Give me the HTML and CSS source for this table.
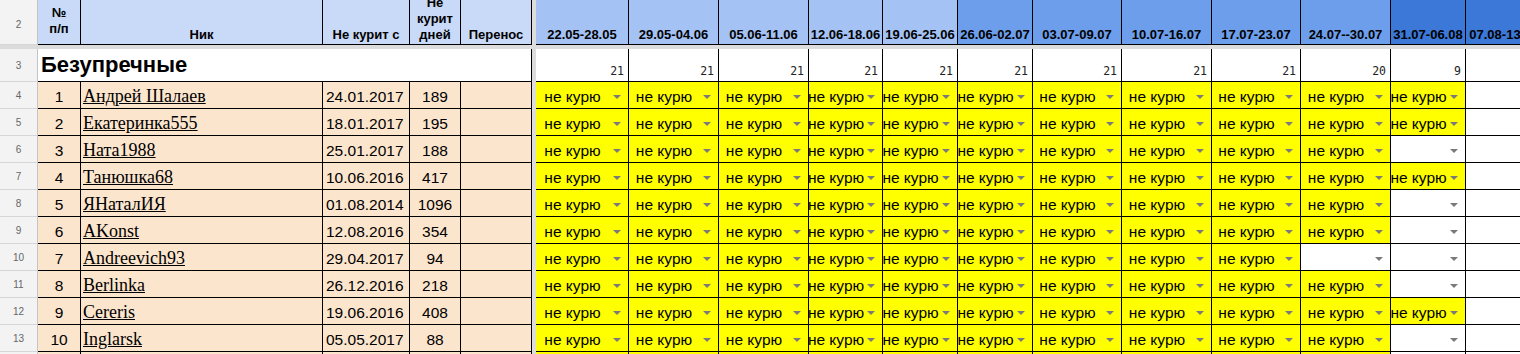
FILE: index.html
```html
<!DOCTYPE html>
<html lang="ru">
<head>
<meta charset="utf-8">
<title>Безупречные</title>
<link rel="stylesheet" href="styles.css">
</head>
<body>
<div class="sheet">
  <div class="band-v"></div>
  <div class="band-h"></div>

  <div class="rh rh-top">2</div>
  <div class="h h-no">№<br>п/п</div>
  <div class="h">Ник</div>
  <div class="h">Не курит с</div>
  <div class="h">Не<br>курит<br>дней</div>
  <div class="h">Перенос</div>
  <div class="h hd1">22.05-28.05</div>
  <div class="h hd1">29.05-04.06</div>
  <div class="h hd1">05.06-11.06</div>
  <div class="h hd1">12.06-18.06</div>
  <div class="h hd1">19.06-25.06</div>
  <div class="h hd2">26.06-02.07</div>
  <div class="h hd2">03.07-09.07</div>
  <div class="h hd2">10.07-16.07</div>
  <div class="h hd2">17.07-23.07</div>
  <div class="h hd2">24.07--30.07</div>
  <div class="h hd3">31.07-06.08</div>
  <div class="h hd3">07.08-13.08</div>

  <div class="rh">3</div>
  <div class="title">Безупречные</div>
  <div class="cnt">21</div><div class="cnt">21</div><div class="cnt">21</div><div class="cnt">21</div><div class="cnt">21</div><div class="cnt">21</div><div class="cnt">21</div><div class="cnt">21</div><div class="cnt">21</div><div class="cnt">20</div><div class="cnt">9</div><div class="cnt"></div>

  <div class="rh">4</div>
  <div class="c n">1</div><div class="c nick"><a class="lk">Андрей Шалаев</a></div><div class="c date">24.01.2017</div><div class="c days">189</div><div class="c"></div>
  <div class="dd y"><span class="t">не курю</span></div><div class="dd y"><span class="t">не курю</span></div><div class="dd y"><span class="t">не курю</span></div><div class="dd y"><span class="t">не курю</span></div><div class="dd y"><span class="t">не курю</span></div><div class="dd y"><span class="t">не курю</span></div><div class="dd y"><span class="t">не курю</span></div><div class="dd y"><span class="t">не курю</span></div><div class="dd y"><span class="t">не курю</span></div><div class="dd y"><span class="t">не курю</span></div><div class="dd y"><span class="t">не курю</span></div><div class="e"></div>

  <div class="rh">5</div>
  <div class="c n">2</div><div class="c nick"><a class="lk">Екатеринка555</a></div><div class="c date">18.01.2017</div><div class="c days">195</div><div class="c"></div>
  <div class="dd y"><span class="t">не курю</span></div><div class="dd y"><span class="t">не курю</span></div><div class="dd y"><span class="t">не курю</span></div><div class="dd y"><span class="t">не курю</span></div><div class="dd y"><span class="t">не курю</span></div><div class="dd y"><span class="t">не курю</span></div><div class="dd y"><span class="t">не курю</span></div><div class="dd y"><span class="t">не курю</span></div><div class="dd y"><span class="t">не курю</span></div><div class="dd y"><span class="t">не курю</span></div><div class="dd y"><span class="t">не курю</span></div><div class="e"></div>

  <div class="rh">6</div>
  <div class="c n">3</div><div class="c nick"><a class="lk">Ната1988</a></div><div class="c date">25.01.2017</div><div class="c days">188</div><div class="c"></div>
  <div class="dd y"><span class="t">не курю</span></div><div class="dd y"><span class="t">не курю</span></div><div class="dd y"><span class="t">не курю</span></div><div class="dd y"><span class="t">не курю</span></div><div class="dd y"><span class="t">не курю</span></div><div class="dd y"><span class="t">не курю</span></div><div class="dd y"><span class="t">не курю</span></div><div class="dd y"><span class="t">не курю</span></div><div class="dd y"><span class="t">не курю</span></div><div class="dd y"><span class="t">не курю</span></div><div class="dd w"></div><div class="e"></div>

  <div class="rh">7</div>
  <div class="c n">4</div><div class="c nick"><a class="lk">Танюшка68</a></div><div class="c date">10.06.2016</div><div class="c days">417</div><div class="c"></div>
  <div class="dd y"><span class="t">не курю</span></div><div class="dd y"><span class="t">не курю</span></div><div class="dd y"><span class="t">не курю</span></div><div class="dd y"><span class="t">не курю</span></div><div class="dd y"><span class="t">не курю</span></div><div class="dd y"><span class="t">не курю</span></div><div class="dd y"><span class="t">не курю</span></div><div class="dd y"><span class="t">не курю</span></div><div class="dd y"><span class="t">не курю</span></div><div class="dd y"><span class="t">не курю</span></div><div class="dd y"><span class="t">не курю</span></div><div class="e"></div>

  <div class="rh">8</div>
  <div class="c n">5</div><div class="c nick"><a class="lk">ЯНаталИЯ</a></div><div class="c date">01.08.2014</div><div class="c days">1096</div><div class="c"></div>
  <div class="dd y"><span class="t">не курю</span></div><div class="dd y"><span class="t">не курю</span></div><div class="dd y"><span class="t">не курю</span></div><div class="dd y"><span class="t">не курю</span></div><div class="dd y"><span class="t">не курю</span></div><div class="dd y"><span class="t">не курю</span></div><div class="dd y"><span class="t">не курю</span></div><div class="dd y"><span class="t">не курю</span></div><div class="dd y"><span class="t">не курю</span></div><div class="dd y"><span class="t">не курю</span></div><div class="dd w"></div><div class="e"></div>

  <div class="rh">9</div>
  <div class="c n">6</div><div class="c nick"><a class="lk">AKonst</a></div><div class="c date">12.08.2016</div><div class="c days">354</div><div class="c"></div>
  <div class="dd y"><span class="t">не курю</span></div><div class="dd y"><span class="t">не курю</span></div><div class="dd y"><span class="t">не курю</span></div><div class="dd y"><span class="t">не курю</span></div><div class="dd y"><span class="t">не курю</span></div><div class="dd y"><span class="t">не курю</span></div><div class="dd y"><span class="t">не курю</span></div><div class="dd y"><span class="t">не курю</span></div><div class="dd y"><span class="t">не курю</span></div><div class="dd y"><span class="t">не курю</span></div><div class="dd w"></div><div class="e"></div>

  <div class="rh">10</div>
  <div class="c n">7</div><div class="c nick"><a class="lk">Andreevich93</a></div><div class="c date">29.04.2017</div><div class="c days">94</div><div class="c"></div>
  <div class="dd y"><span class="t">не курю</span></div><div class="dd y"><span class="t">не курю</span></div><div class="dd y"><span class="t">не курю</span></div><div class="dd y"><span class="t">не курю</span></div><div class="dd y"><span class="t">не курю</span></div><div class="dd y"><span class="t">не курю</span></div><div class="dd y"><span class="t">не курю</span></div><div class="dd y"><span class="t">не курю</span></div><div class="dd y"><span class="t">не курю</span></div><div class="dd w"></div><div class="dd w"></div><div class="e"></div>

  <div class="rh">11</div>
  <div class="c n">8</div><div class="c nick"><a class="lk">Berlinka</a></div><div class="c date">26.12.2016</div><div class="c days">218</div><div class="c"></div>
  <div class="dd y"><span class="t">не курю</span></div><div class="dd y"><span class="t">не курю</span></div><div class="dd y"><span class="t">не курю</span></div><div class="dd y"><span class="t">не курю</span></div><div class="dd y"><span class="t">не курю</span></div><div class="dd y"><span class="t">не курю</span></div><div class="dd y"><span class="t">не курю</span></div><div class="dd y"><span class="t">не курю</span></div><div class="dd y"><span class="t">не курю</span></div><div class="dd y"><span class="t">не курю</span></div><div class="dd w"></div><div class="e"></div>

  <div class="rh">12</div>
  <div class="c n">9</div><div class="c nick"><a class="lk">Cereris</a></div><div class="c date">19.06.2016</div><div class="c days">408</div><div class="c"></div>
  <div class="dd y"><span class="t">не курю</span></div><div class="dd y"><span class="t">не курю</span></div><div class="dd y"><span class="t">не курю</span></div><div class="dd y"><span class="t">не курю</span></div><div class="dd y"><span class="t">не курю</span></div><div class="dd y"><span class="t">не курю</span></div><div class="dd y"><span class="t">не курю</span></div><div class="dd y"><span class="t">не курю</span></div><div class="dd y"><span class="t">не курю</span></div><div class="dd y"><span class="t">не курю</span></div><div class="dd y"><span class="t">не курю</span></div><div class="e"></div>

  <div class="rh">13</div>
  <div class="c n">10</div><div class="c nick"><a class="lk">Inglarsk</a></div><div class="c date">05.05.2017</div><div class="c days">88</div><div class="c"></div>
  <div class="dd y"><span class="t">не курю</span></div><div class="dd y"><span class="t">не курю</span></div><div class="dd y"><span class="t">не курю</span></div><div class="dd y"><span class="t">не курю</span></div><div class="dd y"><span class="t">не курю</span></div><div class="dd y"><span class="t">не курю</span></div><div class="dd y"><span class="t">не курю</span></div><div class="dd y"><span class="t">не курю</span></div><div class="dd y"><span class="t">не курю</span></div><div class="dd y"><span class="t">не курю</span></div><div class="dd w"></div><div class="e"></div>

  <div class="rh"></div>
  <div class="c"></div><div class="c"></div><div class="c"></div><div class="c"></div><div class="c"></div>
  <div class="dd y"></div><div class="dd y"></div><div class="dd y"></div><div class="dd y"></div><div class="dd y"></div><div class="dd y"></div><div class="dd y"></div><div class="dd y"></div><div class="dd y"></div><div class="dd y"></div><div class="dd w"></div><div class="e"></div>
</div>
</body>
</html>
```

FILE: styles.css
```css
* {
  box-sizing: border-box;
}

html, body {
  margin: 0;
  padding: 0;
  background: #ffffff;
  overflow: hidden;
}

body {
  font-family: "Liberation Sans", Arial, sans-serif;
  color: #000;
}

.sheet {
  display: grid;
  grid-template-columns: 38px 43px 242px 87px 51px 71px 4px 93px 90px 90px 74px 75px 75px 89px 90px 89px 90px 75px 77px;
  grid-template-rows: 45px 4px 33px repeat(11, 27px);
  width: max-content;
}

.sheet > div {
  overflow: hidden;
  white-space: nowrap;
  min-width: 0;
}

.band-v {
  grid-column: 7;
  grid-row: 1 / -1;
  background: #dcdcdc;
}

.band-h {
  grid-column: 1 / -1;
  grid-row: 2;
  background: #dcdcdc;
}

/* row numbers */
.rh {
  background: #f3f3f3;
  color: #666;
  font-size: 10px;
  display: flex;
  align-items: center;
  justify-content: center;
  border-right: 1px solid #c4c4c4;
  border-bottom: 1px solid #d6d6d6;
}

.rh-top {
  padding-top: 4px;
}

/* header row */
.h {
  background: #c9daf8;
  font-weight: bold;
  font-size: 13px;
  line-height: 16px;
  display: flex;
  flex-direction: column;
  justify-content: flex-end;
  align-items: center;
  text-align: center;
  padding-bottom: 1px;
  border-right: 1px solid #000;
  border-bottom: 1px solid #000;
}

.h-no {
  padding-bottom: 7px;
}

.hd1 {
  background: #a4c2f4;
}

.hd2 {
  background: #6d9eeb;
}

.hd3 {
  background: #3c78d8;
}

/* section title row */
.title {
  grid-column: span 5;
  background: #fff;
  font-weight: bold;
  font-size: 22px;
  line-height: 26px;
  display: flex;
  align-items: flex-end;
  padding: 0 0 3px 3px;
  border-right: 1px solid #000;
  border-bottom: 1px solid #000;
}

.cnt {
  background: #fff;
  font-family: "DejaVu Sans Mono", "Liberation Mono", monospace;
  font-size: 11.5px;
  line-height: 14px;
  color: #222;
  display: flex;
  align-items: flex-end;
  justify-content: flex-end;
  padding: 0 4px 3px 0;
  border-right: 1px solid #000;
  border-bottom: 1px solid #000;
}

/* participant cells */
.c {
  background: #fce5cd;
  font-size: 15.5px;
  line-height: 17px;
  display: flex;
  align-items: flex-end;
  padding-bottom: 3px;
  border-right: 1px solid #000;
  border-bottom: 1px solid #000;
}

.n,
.days {
  justify-content: center;
}

.date {
  padding-left: 3px;
}

.nick {
  font-family: "Liberation Serif", "Times New Roman", serif;
  font-size: 18px;
  padding-left: 2px;
}

.lk {
  color: #000;
  text-decoration: underline;
}

/* week cells */
.e {
  background: #fff;
  border-right: 1px solid #000;
  border-bottom: 1px solid #000;
}

.dd {
  font-size: 15.5px;
  line-height: 17px;
  display: flex;
  align-items: flex-end;
  padding-bottom: 3px;
  border-right: 1px solid #000;
  border-bottom: 1px solid #000;
}

.dd.y {
  background: #ffff00;
}

.dd.w {
  background: #fff;
}

.dd .t {
  flex: 1 1 0;
  min-width: 0;
  display: flex;
  justify-content: center;
  white-space: nowrap;
}

.dd::after {
  content: "";
  flex: none;
  width: 8px;
  height: 4px;
  margin: 0 7px 6px auto;
  background: #7a7a7a;
  clip-path: polygon(0 0, 100% 0, 50% 100%);
}

.dd.y::after {
  margin-left: 4px;
}
```
